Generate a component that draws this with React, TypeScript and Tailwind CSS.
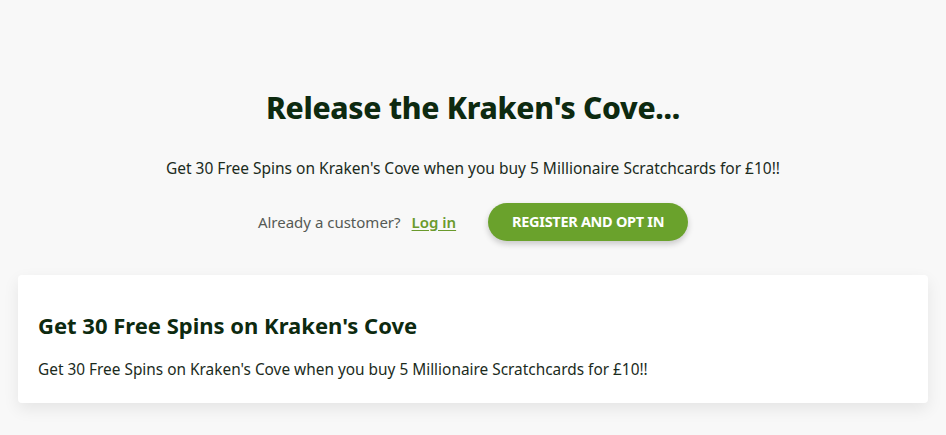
import React from "react";

export default function App() {
  return (
    <div className="min-h-[435px] w-full bg-[#f8f8f8] text-[#0f2a12]" style={{ fontFamily: '"Noto Sans", "Open Sans", sans-serif' }}>
      <div className="flex flex-col items-center pt-[86px]">
        <h1 className="text-[30px] font-extrabold leading-[44px] tracking-[-0.3px] text-[#0d2a10]">Release the Kraken's Cove...</h1>
        <p className="mt-[28px] text-[15.5px] leading-[20px] text-[#1b2b1c]">
          Get 30 Free Spins on Kraken's Cove when you buy 5 Millionaire Scratchcards for £10!!
        </p>
        <div className="mt-[25px] flex items-center">
          <span className="text-[15px] text-[#555a55]">Already a customer?</span>
          <a className="ml-[11px] text-[15px] font-semibold text-[#6a9a2c] underline underline-offset-2">Log in</a>
          <button className="ml-[32px] h-[38px] w-[200px] rounded-full bg-[#6aa22c] text-[14.5px] font-bold tracking-[-0.3px] text-white shadow-[0_3px_6px_rgba(0,0,0,0.2)]">
            REGISTER AND OPT IN
          </button>
        </div>
      </div>
      <div className="mx-[18px] mt-[34px] rounded-[4px] bg-white px-[20px] pb-[23px] pt-[35px] shadow-[0_6px_16px_rgba(0,0,0,0.08)]">
        <h2 className="text-[22px] font-bold leading-[30px] text-[#0d2a10]">Get 30 Free Spins on Kraken's Cove</h2>
        <p className="mt-[20px] text-[15.4px] leading-[20px] text-[#1b2b1c]">
          Get 30 Free Spins on Kraken's Cove when you buy 5 Millionaire Scratchcards for £10!!
        </p>
      </div>
    </div>
  );
}
